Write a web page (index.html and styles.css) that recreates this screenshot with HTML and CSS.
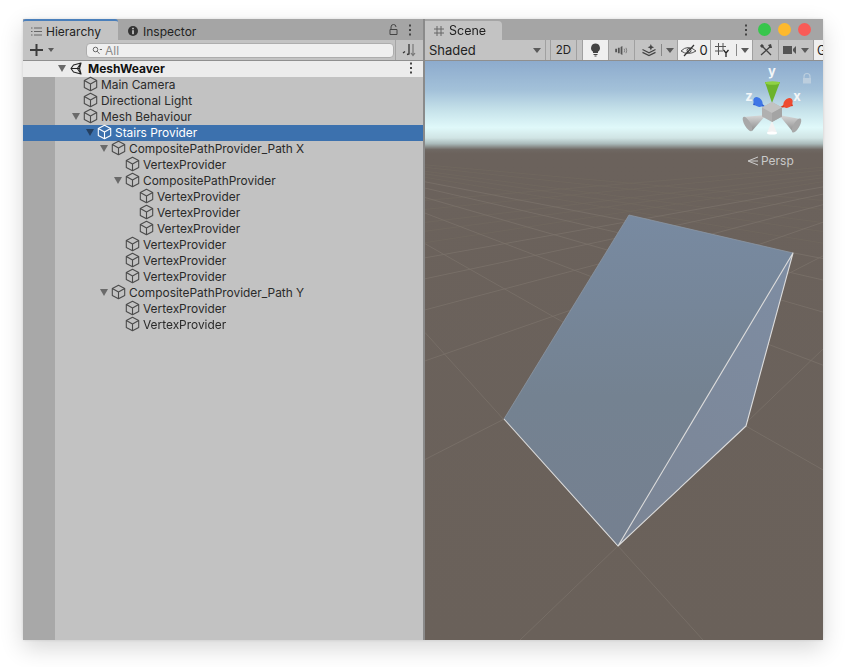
FILE: index.html
```html
<!DOCTYPE html>
<html lang="en">
<head>
<meta charset="utf-8">
<title>MeshWeaver</title>
<link rel="stylesheet" href="styles.css">
</head>
<body>
<svg class="defs" width="0" height="0">
  <symbol id="cube" viewBox="0 0 15 16"><path d="M7.500 1.200 13.700 4.400V11.400L7.500 14.800 1.300 11.400V4.400ZM1.300 4.400 7.500 8 13.700 4.400M7.500 8V14.800" fill="none" stroke="currentColor" stroke-width="1.100" stroke-linejoin="round"/></symbol>
  <symbol id="dots" viewBox="0 0 4 12"><rect x="1" y="0.500" width="2" height="2"/><rect x="1" y="5" width="2" height="2"/><rect x="1" y="9.500" width="2" height="2"/></symbol>
</svg>
<main class="window">
  <section class="pane hierarchy">
    <div class="tabs">
      <div class="tab tab-hier">
        <svg class="ic" width="11" height="9" viewBox="0 0 11 9"><path d="M3 1H11M3 4.500H11M3 8H11M0 1H1.500M0 4.500H1.500M0 8H1.500" stroke="#666" fill="none"/></svg>
        <span>Hierarchy</span>
      </div>
      <div class="tab-flat">
        <svg class="ic" width="10" height="10" viewBox="0 0 10 10"><circle cx="5" cy="5" r="5" fill="#333"/><rect x="4.200" y="4.200" width="1.600" height="4" fill="#ccc"/><rect x="4.200" y="1.800" width="1.600" height="1.500" fill="#ccc"/></svg>
        <span>Inspector</span>
      </div>
      <div class="tab-tools">
        <svg width="9" height="11" viewBox="0 0 9 11"><path d="M2 5V3a2.500 2.500 0 0 1 5 0M1 5.500H8V10.500H1Z" fill="none" stroke="#444"/></svg>
        <svg class="dots" width="4" height="12"><use href="#dots"/></svg>
      </div>
    </div>
    <div class="toolbar h-toolbar">
      <div class="add">
        <svg width="13" height="12" viewBox="0 0 13 12"><path d="M0 6H13M6.500 0V12" stroke="#3c3c3c" stroke-width="2"/></svg>
        <i class="caret small"></i>
      </div>
      <div class="search">
        <svg width="10" height="9" viewBox="0 0 10 9"><circle cx="3.500" cy="3.500" r="2.300" fill="none" stroke="#666"/><path d="M5.300 5.300 7.500 7.800M7.800 3.500H10" stroke="#666"/></svg>
        <span>All</span>
      </div>
      <div class="sort">
        <svg width="15" height="14" viewBox="0 0 15 14"><path d="M7 1V11L5 11.500M1 10 3 8.500" fill="none" stroke="#333" stroke-width="1.300"/><path d="M11 1V12.500M9 10 11 12.500 13 10" fill="none" stroke="#777" stroke-width="1.200"/></svg>
      </div>
    </div>
    <div class="tree">
      <div class="scene-row">
        <div class="row-main">
          <i class="chev"></i>
          <svg class="unity" width="12" height="13" viewBox="0 0 12 13"><path d="M11 1 3.500 3 1 6.500 3.500 10 11 12 9.500 6.500ZM1.500 6.500H9.500M11 1 7.500 6.300M11 12 7.500 6.700" fill="none" stroke="#222" stroke-width="1.100" stroke-linejoin="round"/></svg>
          <strong>MeshWeaver</strong>
        </div>
        <svg class="dots dark" width="4" height="12"><use href="#dots"/></svg>
      </div>
      <div class="row d0"><i class="slot"></i><svg class="cube"><use href="#cube"/></svg><span>Main Camera</span></div>
      <div class="row d0"><i class="slot"></i><svg class="cube"><use href="#cube"/></svg><span>Directional Light</span></div>
      <div class="row d0"><i class="chev"></i><svg class="cube"><use href="#cube"/></svg><span>Mesh Behaviour</span></div>
      <div class="row d1 selected"><i class="chev"></i><svg class="cube"><use href="#cube"/></svg><span>Stairs Provider</span></div>
      <div class="row d2"><i class="chev"></i><svg class="cube"><use href="#cube"/></svg><span>CompositePathProvider_Path X</span></div>
      <div class="row d3"><i class="slot"></i><svg class="cube"><use href="#cube"/></svg><span>VertexProvider</span></div>
      <div class="row d3"><i class="chev"></i><svg class="cube"><use href="#cube"/></svg><span>CompositePathProvider</span></div>
      <div class="row d4"><i class="slot"></i><svg class="cube"><use href="#cube"/></svg><span>VertexProvider</span></div>
      <div class="row d4"><i class="slot"></i><svg class="cube"><use href="#cube"/></svg><span>VertexProvider</span></div>
      <div class="row d4"><i class="slot"></i><svg class="cube"><use href="#cube"/></svg><span>VertexProvider</span></div>
      <div class="row d3"><i class="slot"></i><svg class="cube"><use href="#cube"/></svg><span>VertexProvider</span></div>
      <div class="row d3"><i class="slot"></i><svg class="cube"><use href="#cube"/></svg><span>VertexProvider</span></div>
      <div class="row d3"><i class="slot"></i><svg class="cube"><use href="#cube"/></svg><span>VertexProvider</span></div>
      <div class="row d2"><i class="chev"></i><svg class="cube"><use href="#cube"/></svg><span>CompositePathProvider_Path Y</span></div>
      <div class="row d3"><i class="slot"></i><svg class="cube"><use href="#cube"/></svg><span>VertexProvider</span></div>
      <div class="row d3"><i class="slot"></i><svg class="cube"><use href="#cube"/></svg><span>VertexProvider</span></div>
    </div>
  </section>
  <section class="pane scene">
    <div class="tabs scene-tabs">
      <div class="tab tab-scene">
        <svg class="ic" width="10" height="10" viewBox="0 0 10 10"><path d="M3 0V10M7 0V10M0 3H10M0 7H10" stroke="#666" fill="none"/></svg>
        <span>Scene</span>
      </div>
      <div class="tab-tools win">
        <svg class="dots" width="4" height="12"><use href="#dots"/></svg>
        <i class="light green"></i><i class="light yellow"></i><i class="light red"></i>
      </div>
    </div>
    <div class="toolbar s-toolbar">
      <div class="seg shaded"><span>Shaded</span><i class="caret"></i></div>
      <i class="gap g1"></i>
      <div class="seg b2d">2D</div>
      <i class="gap g2"></i>
      <div class="seg btn on">
        <svg width="11" height="14" viewBox="0 0 11 14"><path d="M5.500 0.500a4.500 4.500 0 0 1 2.500 8.200V10H3V8.700A4.500 4.500 0 0 1 5.500 0.500Z" fill="#444"/><path d="M3.500 11.500H7.500M4.500 13H6.500" stroke="#444"/></svg>
      </div>
      <div class="seg btn">
        <svg width="13" height="9" viewBox="0 0 14 10"><path d="M0 3H2V7H0ZM3 2H5V8H3ZM6 1 8 0V10L6 9Z" fill="#555"/><path d="M10 3Q11 5 10 7M12 2Q13.500 5 12 8" stroke="#777" fill="none"/></svg>
      </div>
      <div class="seg btn fx">
        <svg width="16" height="13" viewBox="0 0 16 14"><path d="M1 6 8 9.500 15 6M1 9 8 12.500 15 9" fill="none" stroke="#444" stroke-width="1.300"/><path d="M10 0 11 2.500 13.500 3.500 11 4.500 10 7 9 4.500 6.500 3.500 9 2.500Z" fill="#444"/></svg>
        <i class="vline"></i><i class="caret"></i>
      </div>
      <div class="seg btn on vis">
        <svg width="17" height="13" viewBox="0 0 17 13"><path d="M1 7Q8 0 16 7Q8 12 1 7Z" fill="none" stroke="#555"/><circle cx="9" cy="6.500" r="2" fill="none" stroke="#444"/><path d="M4 12 14 1" stroke="#333" stroke-width="1.200"/></svg>
        <span>0</span>
      </div>
      <div class="seg btn on grid">
        <svg width="17" height="14" viewBox="0 0 17 14"><path d="M3.500 0V12M8 0V7M0 3.500H11M0 8H8" stroke="#555" fill="none"/><path d="M8.500 7 11 10 13.500 7M11 10V14" stroke="#222" stroke-width="1.300" fill="none"/></svg>
        <i class="vline"></i><i class="caret"></i>
      </div>
      <div class="seg btn">
        <svg width="14" height="14" viewBox="0 0 14 14"><path d="M2 2 12 12M12 3 2 12" stroke="#444" stroke-width="1.300" fill="none"/><path d="M1 3 3 1 5 3 3 5ZM9 2 12 1 13 5 11 5Z" fill="#444"/></svg>
      </div>
      <div class="seg btn cam">
        <svg width="14" height="10" viewBox="0 0 14 10"><rect x="0" y="1" width="9" height="8" fill="#555"/><path d="M10 4 13 1V9L10 6Z" fill="#555"/></svg>
        <i class="caret"></i>
      </div>
      <div class="seg btn on giz"><span>G</span></div>
    </div>
    <div class="view">
      <svg class="canvas" width="398" height="579" viewBox="425 61 398 579">
        <defs>
          <linearGradient id="sky" x1="0" y1="61" x2="0" y2="640" gradientUnits="userSpaceOnUse">
            <stop offset="0" stop-color="#8dabcd"/>
            <stop offset=".05" stop-color="#a3c1d9"/>
            <stop offset=".085" stop-color="#c6e2ea"/>
            <stop offset=".115" stop-color="#e0f9fa"/>
            <stop offset=".133" stop-color="#d0e4e4"/>
            <stop offset=".143" stop-color="#a9b9b9"/>
            <stop offset=".153" stop-color="#6f6863"/>
            <stop offset=".16" stop-color="#6b625c"/>
            <stop offset="1" stop-color="#6a615a"/>
          </linearGradient>
          <linearGradient id="mesh" x1="640" y1="215" x2="640" y2="546" gradientUnits="userSpaceOnUse">
            <stop offset="0" stop-color="#788aa1"/>
            <stop offset=".55" stop-color="#748291"/>
            <stop offset="1" stop-color="#758090"/>
          </linearGradient>
          <linearGradient id="mesh2" x1="793" y1="253" x2="640" y2="546" gradientUnits="userSpaceOnUse">
            <stop offset="0" stop-color="#7e8da3"/>
            <stop offset="1" stop-color="#7b8595"/>
          </linearGradient>
          <linearGradient id="coneL" x1="0" y1="0" x2="0" y2="1">
            <stop offset="0" stop-color="#d8d8d8"/>
            <stop offset="1" stop-color="#8c8c8c"/>
          </linearGradient>
        </defs>
        <rect class="bg" x="425" y="61" width="398" height="579" fill="url(#sky)"/>
        <g class="gridlines far">
          <path d="M425 222.400 823 174.800M425 231.300 823 177.800M425 242.700 823 181.700M425 209.400 823 170.300M425 200.400 823 167.200"/>
          <path d="M425 171.300 823 222.600M425 173.900 823 231.600M425 177.300 823 243.200M425 167.400 823 209.500M425 164.800 823 200.400"/>
        </g>
        <g class="gridlines">
          <path d="M520 640 823 349M425 459.500 823 255.900M425 360.900 823 222.200M425 309.900 823 204.700M425 278.800 823 194.100M425 257.800 823 186.900"/>
          <path d="M425 332.500 703 640M425 243.700 823 469.900M425 213.100 823 365.200M425 197.500 823 312.100M425 188.100 823 280M425 181.800 823 258.600"/>
        </g>
        <path d="M629 215 793 253 618 546 504 419Z" fill="url(#mesh)"/>
        <path d="M793 253 746 426 618 546Z" fill="url(#mesh2)"/>
        <path class="edge-soft" d="M504 419 629 215 793 253"/>
        <path class="edge" d="M504 419 618 546 746 426 793 253 618 546"/>

        <path d="M765 82H780L772 103Z" fill="#6cb32c"/>
        <ellipse cx="772.500" cy="83" rx="7.500" ry="1.800" fill="#8fd243"/>
        <path d="M755 98 766 107 753 105Z" fill="#2f5fd0"/>
        <ellipse cx="758" cy="102" rx="4" ry="5.500" transform="rotate(-40 758 102)" fill="#3f76e6"/>
        <path d="M791 100 779 108 793 106Z" fill="#d83a20"/>
        <ellipse cx="788" cy="103" rx="4" ry="5.500" transform="rotate(40 788 103)" fill="#ee4a30"/>
        <path d="M766 115 743 117 752 131Z" fill="url(#coneL)"/>
        <ellipse cx="747.500" cy="124" rx="3" ry="8.200" transform="rotate(-30 747.500 124)" fill="#a8a8a8"/>
        <path d="M779 115 800 119 793 132Z" fill="url(#coneL)"/>
        <ellipse cx="796.500" cy="125.500" rx="3" ry="8" transform="rotate(30 796.500 125.500)" fill="#a8a8a8"/>
        <path d="M772 121 767 133H777Z" fill="#f2f2f2"/>
        <ellipse cx="772" cy="133" rx="5" ry="1.500" fill="#fff"/>
        <path d="M772 102 782 107.500 782 116.500 772 122 762 116.500 762 107.500Z" fill="#b0b0b0"/>
        <path d="M772 102 782 107.500 772 113 762 107.500Z" fill="#c2c2c2"/>
        <path d="M772 113 782 107.500 782 116.500 772 122Z" fill="#a4a4a4"/>
        <text class="axis" x="772" y="76" text-anchor="middle">y</text>
        <text class="axis" x="749" y="101" text-anchor="middle">z</text>
        <text class="axis" x="797" y="101" text-anchor="middle">x</text>
        <path d="M804 78V76.500a3 3 0 0 1 6 0V78" fill="none" stroke="#bccede" stroke-width="1.200"/>
        <rect x="803" y="78" width="8" height="5.500" fill="#bccede"/>
        <path d="M758 157 748 161 758 165M758 161H750" fill="none" stroke="#cfcfcf"/>
        <text class="persp" x="761" y="165">Persp</text>
      </svg>
    </div>
  </section>
</main>
</body>
</html>
```
FILE: styles.css
```css
* { box-sizing: border-box; }
html, body { margin: 0; height: 100%; background: #fff; }
body {
  padding: 19px 23px 27px;
  font-family: Inter, "Liberation Sans", sans-serif;
  font-size: 12px;
  color: #222;
  overflow: hidden;
}
.defs { position: absolute; }
i { display: block; }
.window {
  display: flex;
  width: 800px;
  height: 621px;
  background: #8a8a8a;
  box-shadow: 0 8px 22px rgba(0, 0, 0, .16), 0 0 3px rgba(0, 0, 0, .12);
  overflow: hidden;
  filter: blur(.3px);
}
.pane { display: flex; flex-direction: column; min-width: 0; }
.hierarchy { width: 400px; }
.scene { width: 398px; margin-left: 2px; }

.tabs {
  display: flex;
  align-items: flex-end;
  height: 21px;
  background: #a5a5a5;
  flex: none;
}
.tab {
  display: flex;
  align-items: center;
  height: 20px;
  background: #c3c3c3;
  font-size: 12px;
}
.tab-hier {
  width: 95px;
  height: 21px;
  padding: 2px 0 0 8px;
  gap: 4px;
  border-top: 2px solid #4a7fbb;
  border-radius: 3px 3px 0 0;
}
.tab-scene {
  width: 77px;
  height: 19px;
  padding-left: 9px;
  gap: 5px;
  border-radius: 0 4px 0 0;
  font-size: 12.500px;
}
.tab-flat {
  display: flex;
  align-items: center;
  height: 21px;
  padding: 3px 0 0 10px;
  gap: 5px;
  font-size: 12px;
}
.tab-flat .ic { flex: none; }
.tab-tools {
  display: flex;
  align-items: center;
  gap: 10px;
  height: 21px;
  margin-left: auto;
  padding-right: 11px;
  flex: none;
}
.dots { fill: #444; }
.win { gap: 0; padding-right: 12px; }
.win .dots { margin-right: 10px; }
.light { width: 13px; height: 13px; border-radius: 50%; margin-left: 7px; }
.win .light:first-of-type { margin-left: 0; }
.green { background: #37c64c; }
.yellow { background: #fdb92c; }
.red { background: #f95b57; }

.toolbar {
  display: flex;
  align-items: stretch;
  height: 21px;
  flex: none;
  background: #c3c3c3;
  border-bottom: 1px solid #8f8f8f;
}
.add {
  display: flex;
  align-items: center;
  gap: 5px;
  width: 63px;
  padding-left: 7px;
}
.caret {
  width: 0;
  height: 0;
  border-left: 4.500px solid transparent;
  border-right: 4.500px solid transparent;
  border-top: 5px solid #5a5a5a;
}
.caret.small { border-left-width: 3.500px; border-right-width: 3.500px; border-top-width: 4px; }
.search {
  display: flex;
  align-items: center;
  gap: 3px;
  width: 308px;
  height: 15px;
  margin-top: 3px;
  padding-left: 5px;
  background: #efefef;
  border: 1px solid #adadad;
  border-radius: 4px;
  color: #8a8a8a;
}
.sort {
  display: flex;
  align-items: center;
  justify-content: center;
  flex: 1;
  margin-left: 1px;
  border-left: 1px solid #a5a5a5;
}

.tree {
  flex: 1;
  background: linear-gradient(90deg, #a8a8a8 32px, #c2c2c2 32px);
  color: #2a2a2a;
  font-size: 11.900px;
}
.scene-row {
  display: flex;
  align-items: center;
  justify-content: space-between;
  height: 16px;
  padding: 0 10px 2px 35px;
  background: #ececec;
}
.row-main { display: flex; align-items: center; }
.scene-row strong { margin-left: 6px; font-weight: 700; font-size: 12px; color: #111; }
.unity { margin-left: 3px; }
.chev, .slot { width: 14px; flex: none; }
.chev {
  width: 8px;
  height: 0;
  margin: 0 4px 0 2px;
  border-left: 4px solid transparent;
  border-right: 4px solid transparent;
  border-top: 7px solid #6a6a6a;
}
.scene-row .chev { margin: 0 1px 0 0; }
.row {
  display: flex;
  align-items: center;
  height: 16px;
  padding-bottom: 2px;
  white-space: nowrap;
}
.row span { margin-left: 3px; }
.cube { width: 15px; height: 16px; flex: none; color: #4b4b4b; margin-left: -1px; }
.d0 { padding-left: 47px; }
.d1 { padding-left: 61px; }
.d2 { padding-left: 75px; }
.d3 { padding-left: 89px; }
.d4 { padding-left: 103px; }
.selected { background: #3c71ae; color: #fff; }
.selected .cube { color: #fff; }
.selected .chev { border-top-color: #243f60; }

.s-toolbar { font-size: 12.500px; }
.seg {
  display: flex;
  align-items: center;
  justify-content: center;
  height: 20px;
  background: #c3c3c3;
  border-right: 1px solid #a0a0a0;
  flex: none;
}
.shaded { width: 121px; justify-content: space-between; padding: 0 4px; font-size: 13px; }
.gap { flex: none; height: 20px; background: #c3c3c3; border-right: 1px solid #a0a0a0; }
.g1 { width: 5px; }
.g2 { width: 6px; }
.b2d { width: 26px; font-size: 11.500px; }
.btn { width: 26px; }
.on { background: #efefef; }
.fx { width: 43px; gap: 4px; padding-left: 3px; }
.vline { width: 1px; height: 12px; background: #888; }
.vis { width: 33px; gap: 2px; font-size: 13px; }
.grid { width: 42px; gap: 4px; }
.cam { width: 35px; gap: 4px; }
.giz { width: 20px; justify-content: flex-start; padding-left: 3px; border: 0; overflow: hidden; }

.view { flex: 1; min-height: 0; }
.canvas { display: block; }
.gridlines path { fill: none; stroke: #7a7169; stroke-width: .8; }
.gridlines.far path { stroke: #72695f; stroke-width: .6; }
.edge { fill: none; stroke: #dcdcdc; stroke-width: 1.100; stroke-linejoin: round; }
.edge-soft { fill: none; stroke: #8c97a5; stroke-width: .8; }
.axis { fill: #f2f6f8; font: 700 13px Inter, "Liberation Sans", sans-serif; }
.persp { fill: #c9c9c9; font: 12px Inter, "Liberation Sans", sans-serif; }
```
